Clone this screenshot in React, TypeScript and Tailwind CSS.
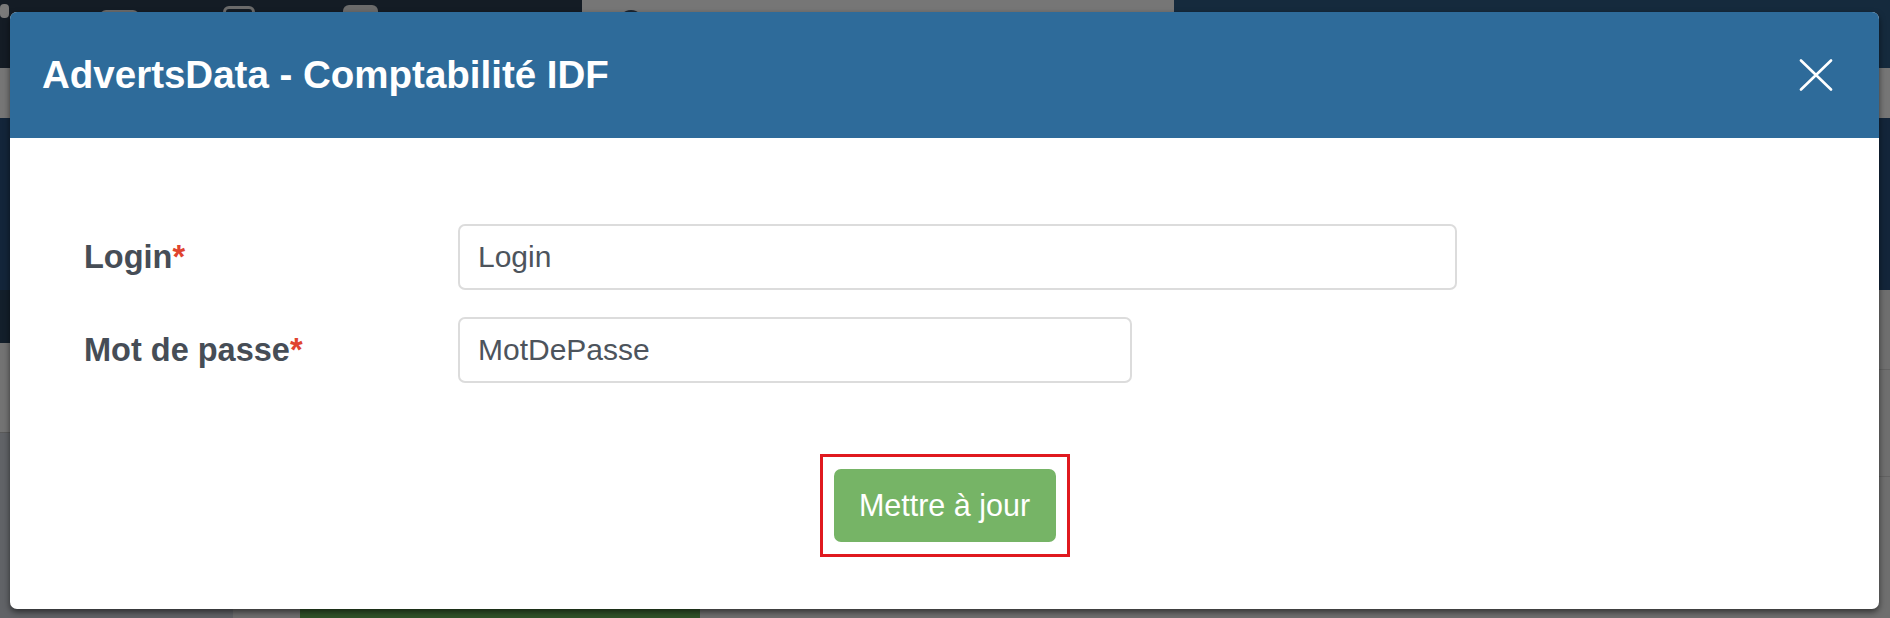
import {useState} from "react";

const Field = ({label, value, width}: {label: string; value: string; width: string}) => (
    <div className="flex items-center">
        <label className="w-[374px] shrink-0 text-[32.5px] font-bold text-[#464d56]">
            {label}<span className="text-[#e0442f]">*</span>
        </label>
        <input
            className={`${width} h-[66px] rounded-[7px] border-2 border-[#dcdcdc] bg-white px-[18px] text-[30px] text-[#4d545c] outline-none`}
            defaultValue={value}
        />
    </div>
);

const App = () => {
    const [open, setOpen] = useState(true);

    return (
        <div className="relative h-[618px] w-full overflow-hidden bg-[#6f6f6f] font-['Liberation_Sans',Arial,sans-serif]">
            {/* page behind the modal, dimmed */}
            <div className="flex h-[68px] items-start bg-[#141c25]">
                <div className="ml-[0px] mt-[4px] h-[14px] w-[9px] rounded-sm bg-[#7a7a7a]"/>
                <div className="ml-[91px] mt-[10px] h-[20px] w-[39px] rounded-t-md bg-[#6b6b6b]"/>
                <div className="ml-[84px] mt-[6px] h-[22px] w-[32px] rounded-md border-[3px] border-[#6b6b6b]"/>
                <div className="ml-[88px] mt-[5px] h-[22px] w-[35px] rounded-md bg-[#6b6b6b]"/>
                <div className="ml-[204px] flex h-[46px] w-[592px] items-center gap-[28px] bg-[#767676] px-[36px]">
                    <div className="h-[26px] w-[26px] rounded-full border-[4px] border-[#1c2530]"/>
                    <span className="text-[30px] text-[#1a1a1a]">Rechercher</span>
                </div>
                <div className="flex-1 self-stretch bg-[#152a3d]"/>
            </div>
            <div className="h-[50px] bg-[#767676]"/>
            <div className="h-[172px] bg-[#13253a]"/>
            <div className="flex h-[328px]">
                <div className="flex w-[233px] flex-col">
                    <div className="h-[53px] bg-[#131f2b]"/>
                    <div className="h-[90px] border-b border-[#5a5a5a] bg-[#737373]"/>
                    <div className="flex-1 bg-[#616367]"/>
                </div>
                <div className="flex flex-1 flex-col">
                    <div className="h-[80px] border-b border-[#626262]"/>
                    <div className="h-[107px] border-b border-[#626262]"/>
                    <div className="flex-1"/>
                    <div className="ml-[67px] h-[9px] w-[400px] bg-[#315229]"/>
                </div>
            </div>

            {/* modal */}
            {open && (
                <div
                    className="absolute left-[10px] top-[12px] flex h-[597px] w-[1869px] flex-col overflow-hidden rounded-[7px] bg-white shadow-[0_3px_6px_rgba(0,0,0,0.55)]">
                    <div className="flex h-[126px] shrink-0 items-center justify-between bg-[#2e6b9a] pl-[32px] pr-[46px]">
                        <h4 className="text-[38.5px] font-bold leading-none text-white">AdvertsData - Comptabilité IDF</h4>
                        <button onClick={() => setOpen(false)} className="text-white">
                            <svg width="34" height="32" viewBox="0 0 34 32" fill="none" stroke="currentColor"
                                 strokeWidth="2.6" strokeLinecap="round">
                                <path d="M2 1.5L32 30.5M32 1.5L2 30.5"/>
                            </svg>
                        </button>
                    </div>

                    <div className="flex flex-col pl-[74px] pt-[86px]">
                        <div className="flex flex-col gap-[27px]">
                            <Field label="Login" value="Login" width="w-[999px]"/>
                            <Field label="Mot de passe" value="MotDePasse" width="w-[674px]"/>
                        </div>
                    </div>

                    <div className="mt-[71px] flex justify-center">
                        <div className="border-[3px] border-[#e0191f] px-[11px] py-[12px]">
                            <button
                                className="h-[73px] w-[222px] rounded-[7px] bg-[#76b466] text-[30.5px] text-white">
                                Mettre à jour
                            </button>
                        </div>
                    </div>
                </div>
            )}
        </div>
    );
};

export default App;
